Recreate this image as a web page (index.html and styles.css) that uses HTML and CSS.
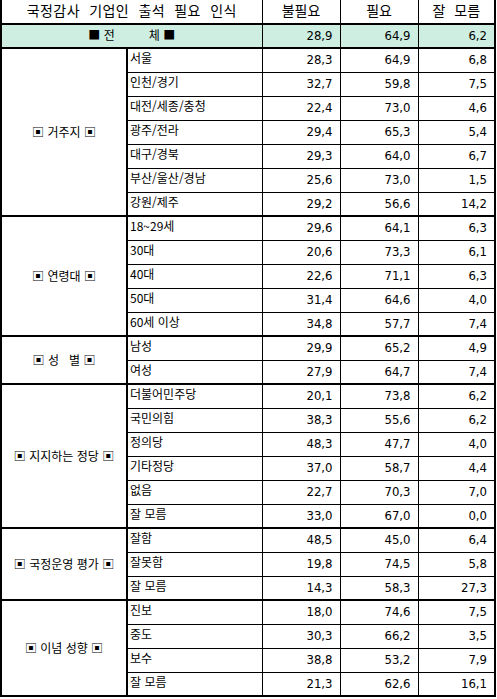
FILE: index.html
```html
<!DOCTYPE html>
<html lang="ko">
<head>
<meta charset="utf-8">
<title>국정감사 기업인 출석 필요 인식</title>
<link rel="stylesheet" href="styles.css">
</head>
<body>
<table class="t">
  <colgroup>
    <col class="c1"><col class="c2"><col class="c3"><col class="c4"><col class="c5">
  </colgroup>
  <thead>
    <tr class="head">
      <th colspan="2" class="title">국정감사 기업인 출석 필요 인식</th>
      <th class="h">불필요</th>
      <th class="h">필요</th>
      <th class="h">잘 모름</th>
    </tr>
  </thead>
  <tbody>
    <tr class="total">
      <td colspan="2" class="tl">■ 전<span class="gap"></span>체 ■</td>
      <td class="n">28,9</td><td class="n">64,9</td><td class="n">6,2</td>
    </tr>

    <tr class="g"><td rowspan="7" class="grp">▣ 거주지 ▣</td><td class="l">서울</td><td class="n">28,3</td><td class="n">64,9</td><td class="n">6,8</td></tr>
    <tr><td class="l">인천/경기</td><td class="n">32,7</td><td class="n">59,8</td><td class="n">7,5</td></tr>
    <tr><td class="l">대전/세종/충청</td><td class="n">22,4</td><td class="n">73,0</td><td class="n">4,6</td></tr>
    <tr><td class="l">광주/전라</td><td class="n">29,4</td><td class="n">65,3</td><td class="n">5,4</td></tr>
    <tr><td class="l">대구/경북</td><td class="n">29,3</td><td class="n">64,0</td><td class="n">6,7</td></tr>
    <tr><td class="l">부산/울산/경남</td><td class="n">25,6</td><td class="n">73,0</td><td class="n">1,5</td></tr>
    <tr><td class="l">강원/제주</td><td class="n">29,2</td><td class="n">56,6</td><td class="n">14,2</td></tr>

    <tr class="g"><td rowspan="5" class="grp">▣ 연령대 ▣</td><td class="l">18~29세</td><td class="n">29,6</td><td class="n">64,1</td><td class="n">6,3</td></tr>
    <tr><td class="l">30대</td><td class="n">20,6</td><td class="n">73,3</td><td class="n">6,1</td></tr>
    <tr><td class="l">40대</td><td class="n">22,6</td><td class="n">71,1</td><td class="n">6,3</td></tr>
    <tr><td class="l">50대</td><td class="n">31,4</td><td class="n">64,6</td><td class="n">4,0</td></tr>
    <tr><td class="l">60세 이상</td><td class="n">34,8</td><td class="n">57,7</td><td class="n">7,4</td></tr>

    <tr class="g"><td rowspan="2" class="grp">▣ 성&nbsp;&nbsp;&nbsp;별 ▣</td><td class="l">남성</td><td class="n">29,9</td><td class="n">65,2</td><td class="n">4,9</td></tr>
    <tr><td class="l">여성</td><td class="n">27,9</td><td class="n">64,7</td><td class="n">7,4</td></tr>

    <tr class="g"><td rowspan="6" class="grp">▣ 지지하는 정당 ▣</td><td class="l">더불어민주당</td><td class="n">20,1</td><td class="n">73,8</td><td class="n">6,2</td></tr>
    <tr><td class="l">국민의힘</td><td class="n">38,3</td><td class="n">55,6</td><td class="n">6,2</td></tr>
    <tr><td class="l">정의당</td><td class="n">48,3</td><td class="n">47,7</td><td class="n">4,0</td></tr>
    <tr><td class="l">기타정당</td><td class="n">37,0</td><td class="n">58,7</td><td class="n">4,4</td></tr>
    <tr><td class="l">없음</td><td class="n">22,7</td><td class="n">70,3</td><td class="n">7,0</td></tr>
    <tr><td class="l">잘 모름</td><td class="n">33,0</td><td class="n">67,0</td><td class="n">0,0</td></tr>

    <tr class="g"><td rowspan="3" class="grp">▣ 국정운영 평가 ▣</td><td class="l">잘함</td><td class="n">48,5</td><td class="n">45,0</td><td class="n">6,4</td></tr>
    <tr><td class="l">잘못함</td><td class="n">19,8</td><td class="n">74,5</td><td class="n">5,8</td></tr>
    <tr><td class="l">잘 모름</td><td class="n">14,3</td><td class="n">58,3</td><td class="n">27,3</td></tr>

    <tr class="g"><td rowspan="4" class="grp">▣ 이념 성향 ▣</td><td class="l">진보</td><td class="n">18,0</td><td class="n">74,6</td><td class="n">7,5</td></tr>
    <tr><td class="l">중도</td><td class="n">30,3</td><td class="n">66,2</td><td class="n">3,5</td></tr>
    <tr><td class="l">보수</td><td class="n">38,8</td><td class="n">53,2</td><td class="n">7,9</td></tr>
    <tr><td class="l">잘 모름</td><td class="n">21,3</td><td class="n">62,6</td><td class="n">16,1</td></tr>
  </tbody>
</table>
</body>
</html>
```
FILE: styles.css
```css
html, body {
  margin: 0;
  padding: 0;
  background: #ffffff;
}

body {
  font-family: "Noto Sans CJK KR", "DejaVu Sans", sans-serif;
  color: #000;
}

.t {
  border-collapse: collapse;
  table-layout: fixed;
  width: 496px;
  border-left: 2px solid #000;
  border-right: 2px solid #000;
  border-bottom: 2px solid #000;
}

.c1 { width: 126px; }
.c2 { width: 135px; }
.c3 { width: 78px; }
.c4 { width: 78px; }
.c5 { width: 77px; }

.t tr { height: 24px; }

.t th,
.t td {
  box-sizing: border-box;
  padding: 0;
  height: 24px;
  font-weight: 400;
  overflow: hidden;
}

.head th {
  border-bottom: 2px solid #000;
  font-size: 14px;
  line-height: 21px;
  vertical-align: top;
  text-align: center;
  word-spacing: 5px;
}

.head .title {
  word-spacing: 5px;
  letter-spacing: 0.4px;
}

.head .h {
  border-left: 1px solid #000;
}

.total td {
  background: #cdeee0;
  border-bottom: 2px solid #000;
}

.total .tl {
  text-align: center;
  font-size: 12px;
  line-height: 20px;
  vertical-align: top;
}

.gap {
  display: inline-block;
  width: 34px;
}

.n {
  text-align: right;
  padding-right: 7px !important;
  font-family: "Liberation Sans Narrow", "DejaVu Sans Condensed", "Liberation Sans", sans-serif;
  font-size: 13px;
  line-height: 21px;
  vertical-align: top;
  border-left: 1px solid #000;
  border-top: 1px solid #000;
}

.l {
  text-align: left;
  padding-left: 2px !important;
  font-size: 12px;
  line-height: 17px;
  vertical-align: top;
  border-left: 2px solid #000;
  border-top: 1px solid #000;
  white-space: nowrap;
}

.grp {
  text-align: center;
  vertical-align: middle;
  font-size: 12px;
  line-height: 16px;
  border-top: 2px solid #000;
  white-space: nowrap;
}

.g td {
  border-top: 2px solid #000;
}
```
